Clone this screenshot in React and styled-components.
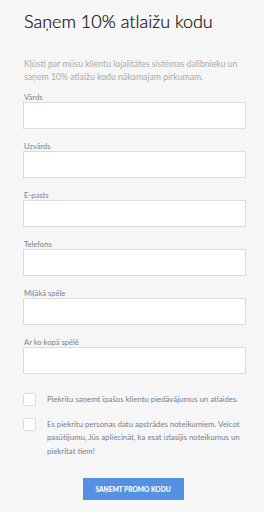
import React from "react";
import styled, { createGlobalStyle } from "styled-components";

const GlobalStyle = createGlobalStyle`
  html, body {
    margin: 0;
    padding: 0;
    background: #f6f6f6;
  }
  * { box-sizing: border-box; }
`;

const fields = [
  "Vārds",
  "Uzvārds",
  "E-pasts",
  "Telefons",
  "Miļākā spēle",
  "Ar ko kopā spēlē",
];

export default function App() {
  return (
    <>
      <GlobalStyle />
      <Page>
        <Title>Saņem 10% atlaižu kodu</Title>
        <Intro>
          Kļūsti par mūsu klientu lojalitātes sistēmas dalībnieku un
          <br />
          saņem 10% atlaižu kodu nākamajam pirkumam.
        </Intro>
        <Form>
          {fields.map((f) => (
            <Field key={f}>
              <Label>{f}</Label>
              <Input type="text" />
            </Field>
          ))}
        </Form>
        <Checks>
          <CheckRow>
            <Box />
            <CheckText>Piekrītu saņemt īpašos klientu piedāvājumus un atlaides.</CheckText>
          </CheckRow>
          <CheckRow>
            <Box />
            <CheckText>
              Es piekrītu personas datu apstrādes noteikumiem. Veicot
              pasūtījumu, Jūs apliecināt, ka esat izlasījis noteikumus un
              piekrītat tiem!
            </CheckText>
          </CheckRow>
        </Checks>
        <Footer>
          <Submit>Saņemt promo kodu</Submit>
        </Footer>
      </Page>
    </>
  );
}

const Page = styled.div`
  width: 264px;
  height: 512px;
  padding: 9px 18px 0 23px;
  font-family: "Lato", "Open Sans", sans-serif;
  background: #f6f6f6;
`;

const Title = styled.h1`
  margin: 0 0 0 1px;
  font-size: 18px;
  font-weight: 300;
  line-height: 24px;
  color: #0c0c0c;
  white-space: nowrap;
  -webkit-text-stroke: 0.2px #0c0c0c;
`;

const Intro = styled.p`
  margin: 25px 0 0 1px;
  font-size: 8.7px;
  line-height: 12.5px;
  color: #ababab;
  white-space: nowrap;
`;

const Form = styled.div`
  display: flex;
  flex-direction: column;
  gap: 12px;
  margin-top: 9px;
`;

const Field = styled.div`
  display: flex;
  flex-direction: column;
`;

const Label = styled.label`
  font-size: 7.6px;
  line-height: 10px;
  color: #7d8189;
  padding-left: 1px;
`;

const Input = styled.input`
  width: 223px;
  height: 27px;
  margin: 0;
  border: 1px solid #dcdcdc;
  background: #fff;
  outline: none;
`;

const Checks = styled.div`
  display: flex;
  flex-direction: column;
  gap: 11px;
  margin-top: 19px;
`;

const CheckRow = styled.div`
  display: flex;
  align-items: flex-start;
  gap: 11px;
`;

const Box = styled.span`
  flex: none;
  width: 13px;
  height: 13px;
  border: 1px solid #dcdcdc;
  border-radius: 2px;
  background: #fff;
`;

const CheckText = styled.p`
  margin: 0;
  font-size: 7.8px;
  line-height: 13.5px;
  color: #7a7e88;
  width: 200px;
`;

const Footer = styled.div`
  display: flex;
  justify-content: center;
  margin-top: 20px;
  padding-right: 3px;
`;

const Submit = styled.button`
  width: 101px;
  height: 22px;
  padding: 0;
  border: none;
  background: #5591e2;
  color: #fff;
  font-family: "Lato", sans-serif;
  font-weight: 900;
  font-size: 6.6px;
  text-transform: uppercase;
  cursor: pointer;
`;
